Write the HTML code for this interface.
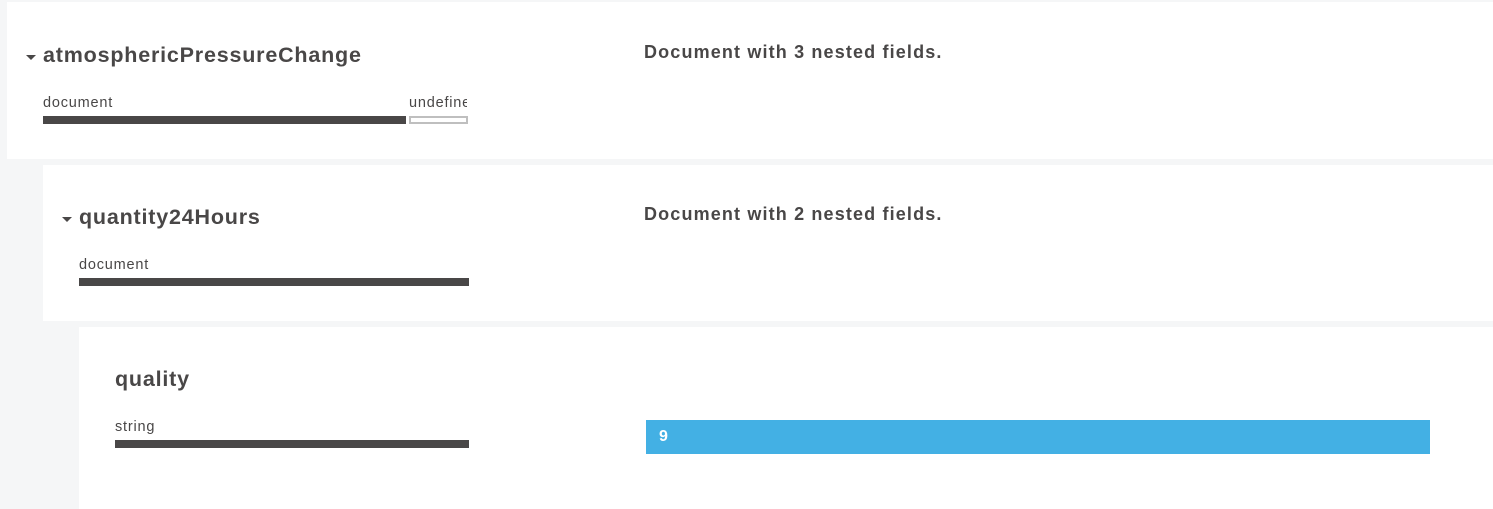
<!DOCTYPE html>
<html><head><style>
body{margin:0;width:1493px;height:509px;background:#f5f6f7;font-family:"Liberation Sans",Arial,sans-serif;position:relative;overflow:hidden;color:#494747}
.p{position:absolute;background:#fff;right:0}
.t{position:absolute;font-size:21.5px;font-weight:bold;white-space:nowrap;letter-spacing:0.8px}
.l{position:absolute;font-size:14.5px;white-space:nowrap;letter-spacing:0.8px}
.b{position:absolute;height:8px;background:#494747}
.d{position:absolute;font-size:18px;font-weight:bold;left:644px;white-space:nowrap;letter-spacing:1.15px}
.c{position:absolute;width:0;height:0;border-left:5px solid transparent;border-right:5px solid transparent;border-top:5px solid #494747}
</style></head><body>
<div class="p" style="left:7px;top:2px;height:157px"></div>
<div class="p" style="left:43px;top:165px;height:156px"></div>
<div class="p" style="left:79px;top:327px;height:182px"></div>

<div class="c" style="left:26px;top:55px"></div>
<div class="t" style="left:43px;top:43px">atmosphericPressureChange</div>
<div class="l" style="left:43px;top:95px">document</div>
<div class="l" style="left:409px;top:95px;width:58px;overflow:hidden">undefined</div>
<div class="b" style="left:43px;top:116px;width:363px"></div>
<div style="position:absolute;left:409px;top:116px;width:55px;height:4px;border:2px solid #bfbfbf"></div>
<div class="d" style="top:42px">Document with 3 nested fields.</div>

<div class="c" style="left:62px;top:217px"></div>
<div class="t" style="left:79px;top:205px">quantity24Hours</div>
<div class="l" style="left:79px;top:257px">document</div>
<div class="b" style="left:79px;top:278px;width:390px"></div>
<div class="d" style="top:204px">Document with 2 nested fields.</div>

<div class="t" style="left:115px;top:367px">quality</div>
<div class="l" style="left:115px;top:419px">string</div>
<div class="b" style="left:115px;top:440px;width:354px"></div>
<div style="position:absolute;left:646px;top:420px;width:784px;height:34px;background:#43b0e4;color:#fff;font-weight:bold;font-size:16px;line-height:34px;padding-left:13px;box-sizing:border-box">9</div>
</body></html>
